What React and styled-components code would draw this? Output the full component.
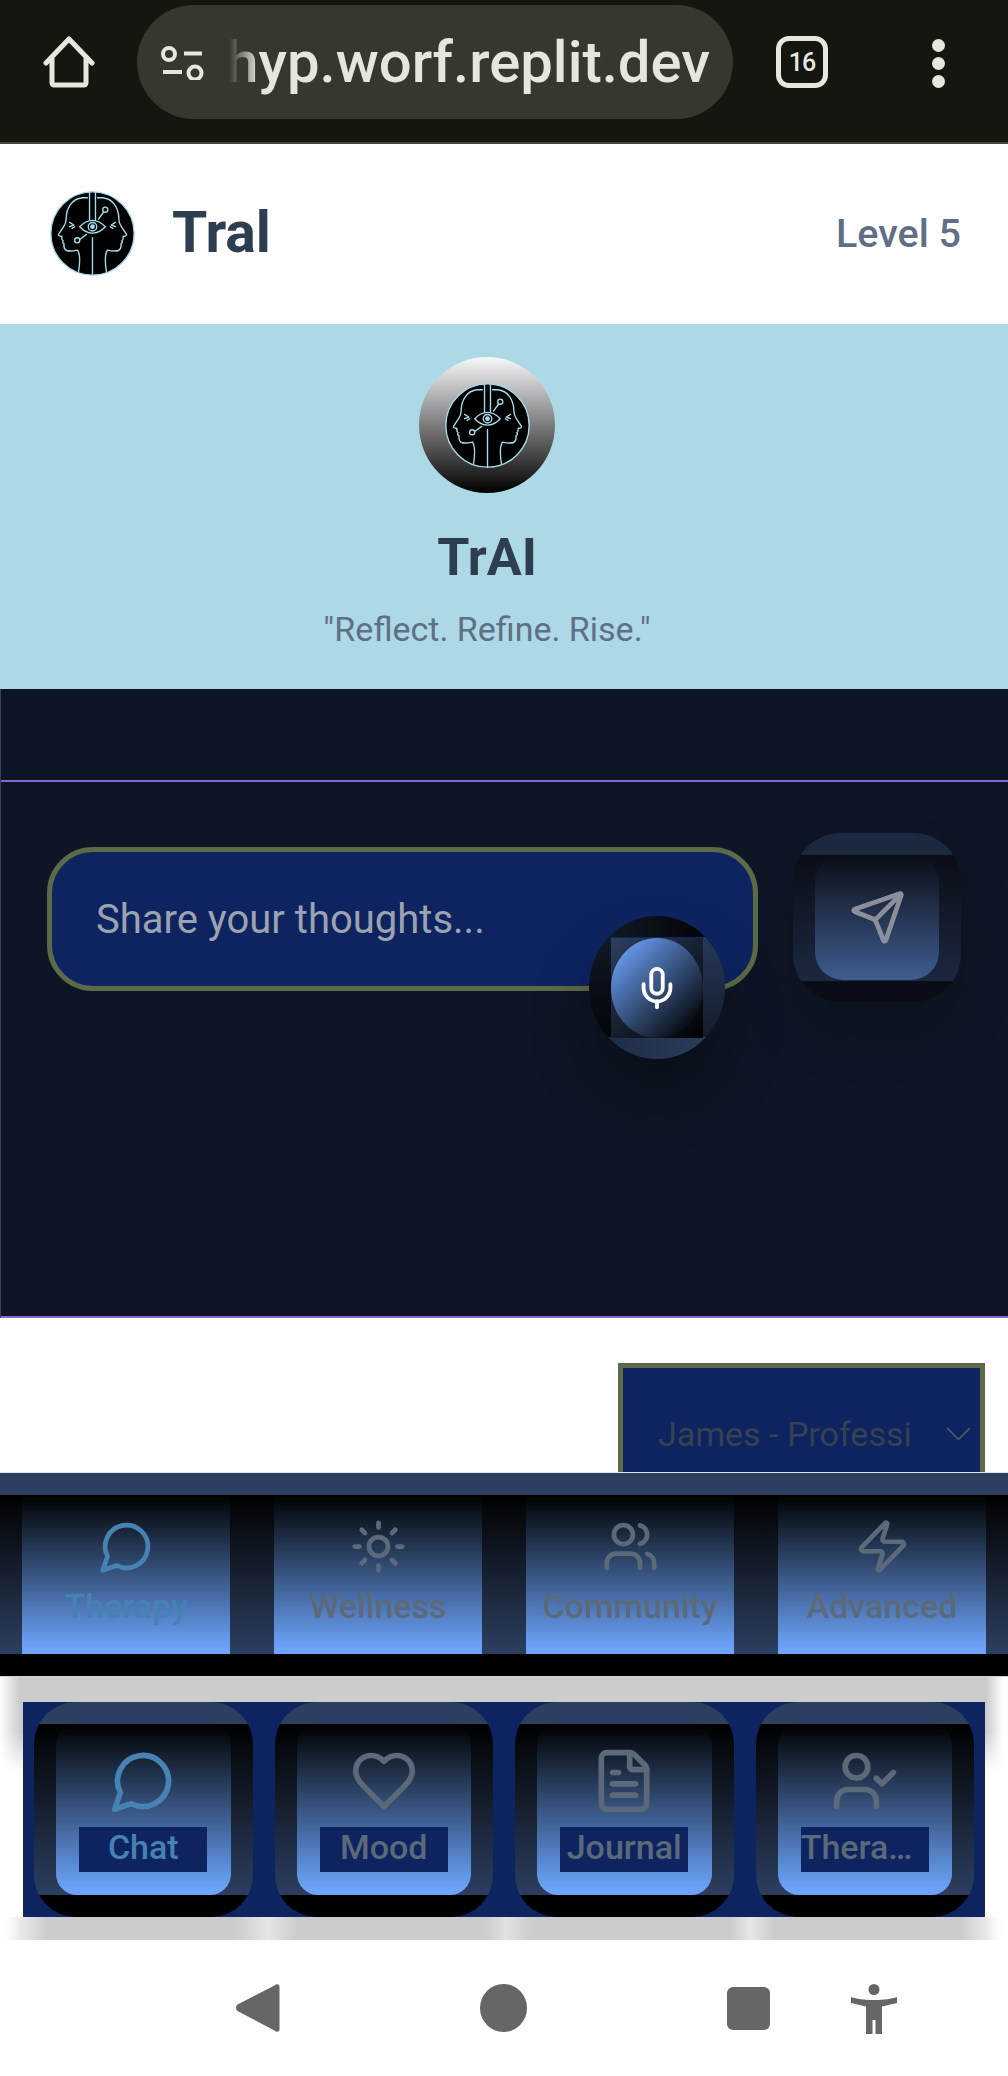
import React from "react";
import styled, { createGlobalStyle } from "styled-components";
import {
  ChevronDown,
  FileText,
  Mic,
  Send,
  Sun,
  UserCheck,
  Users,
  Zap,
} from "lucide-react";

const GlobalStyle = createGlobalStyle`
  html, body {
    margin: 0;
    padding: 0;
    background: #fff;
    font-family: "Roboto", "Liberation Sans", sans-serif;
  }
  * {
    box-sizing: border-box;
  }
`;

const pressedFace = `linear-gradient(180deg, #2c3f60 0 22px, #000 22px, #2c3f60 calc(100% - 22px), #000 calc(100% - 22px))`;

const Logo = ({ size }) => (
  <LogoSvg viewBox="0 0 100 100" width={size} height={size}>
    <circle cx="50" cy="50" r="49" fill="#000" stroke="#a5dcee" strokeWidth="1.6" />
    <path d="M46.5 1v33M53.5 1v33M50 55v45" />
    <path d="M44 8H38C26 9 19 20 19 33c0 4-1 6-3 9l-6 9c-.5 1.500 1 2 4 2.500-.5 2.500 0 4 1.500 5-1 1.500-.5 3 1 3.500-.5 4 .5 7 3 8 3 1 8 .5 13-.5 3 5 3 14 1 26" />
    <path d="M56 8h6c12 1 19 12 19 25 0 4 1 6 3 9l6 9c.5 1.500-1 2-4 2.500.5 2.500 0 4-1.500 5 1 1.500.5 3-1 3.500.5 4-.5 7-3 8-3 1-8 .5-13-.5-3 5-3 14-1 26" />
    <path d="M35 42c9-10 21-10 30 0-9 10-21 10-30 0z" />
    <circle cx="50" cy="42" r="5" />
    <circle cx="50" cy="42" r="2" fill="#a5dcee" />
    <path d="M57 33l6-8M43 51l-8 6" />
    <circle cx="65" cy="22" r="3" />
    <circle cx="32" cy="58" r="3" />
    <path d="M23 37l5 3-5 2M26 44l3-2M77 37l-5 3 5 2M74 44l-3-2" />
  </LogoSvg>
);

const ChatBubble = ({ size, strokeWidth }) => (
  <svg viewBox="0 0 24 24" width={size} height={size} fill="none" stroke="currentColor" strokeWidth={strokeWidth} strokeLinecap="round" strokeLinejoin="round">
    <path d="M7.900 20A9 9 0 1 0 4 16.100L2 22Z" />
  </svg>
);

const HeartOutline = ({ size, strokeWidth }) => (
  <svg viewBox="0 0 24 24" width={size} height={size} fill="none" stroke="currentColor" strokeWidth={strokeWidth} strokeLinecap="round" strokeLinejoin="round">
    <path d="M19 14c1.490-1.460 3-3.210 3-5.500A5.500 5.500 0 0 0 16.500 3c-1.760 0-3 .5-4.500 2-1.500-1.500-2.740-2-4.500-2A5.500 5.500 0 0 0 2 8.500c0 2.300 1.500 4.050 3 5.500l7 7Z" />
  </svg>
);

const HomeIcon = () => (
  <ChromeSvg viewBox="0 0 52 52" width="52" height="52" fill="none">
    <path d="M3 27 26 3l23 24M9 22v25a2 2 0 0 0 2 2h30a2 2 0 0 0 2-2V22" />
  </ChromeSvg>
);

const TuneIcon = () => (
  <TuneSvg viewBox="0 0 44 36" width="44" height="36" fill="none">
    <circle cx="9" cy="10" r="6" />
    <path d="M24 9.500h18M3 28h19" />
    <circle cx="35" cy="29" r="6.500" />
  </TuneSvg>
);

const BackIcon = () => (
  <svg viewBox="0 0 44 48" width="44" height="48" fill="#666">
    <path d="M40 .5c2-.8 3.500.5 3.500 2.500v42c0 2-1.500 3.300-3.500 2.500a4 4 0 0 1-1.500-1L1.500 27c-2-2-2-4.500 0-6.500L38.500 1.500a4 4 0 0 1 1.500-1z" />
  </svg>
);

const PersonIcon = () => (
  <svg viewBox="0 0 46 50" width="46" height="50" fill="#666">
    <circle cx="23" cy="5.500" r="5.500" />
    <path d="M0 13c6 2 12 3 23 3s17-1 23-3v6l-15 3.500V50h-6.500V36h-3v14H15V22.500L0 19z" />
  </svg>
);

const mainTabs = [
  { label: "Therapy", Icon: ChatBubble, active: true },
  { label: "Wellness", Icon: Sun },
  { label: "Community", Icon: Users },
  { label: "Advanced", Icon: Zap },
];

const subTabs = [
  { label: "Chat", Icon: ChatBubble, active: true },
  { label: "Mood", Icon: HeartOutline },
  { label: "Journal", Icon: FileText },
  { label: "Therapist", Icon: UserCheck },
];

const App = () => {
  return (
    <Page>
      <GlobalStyle />
      <BrowserBar>
        <HomeIcon />
        <UrlPill>
          <TuneIcon />
          <UrlText>
            <span>hyp.worf.replit.dev</span>
          </UrlText>
        </UrlPill>
        <TabCount>16</TabCount>
        <MenuDots>
          <i />
          <i />
          <i />
        </MenuDots>
      </BrowserBar>

      <Header>
        <Brand>
          <Logo size={85} />
          <BrandName>Tral</BrandName>
        </Brand>
        <LevelText>Level 5</LevelText>
      </Header>

      <Hero>
        <HeroBadge>
          <Logo size={85} />
        </HeroBadge>
        <HeroTitle>TrAI</HeroTitle>
        <Tagline>"Reflect. Refine. Rise."</Tagline>
      </Hero>

      <ChatPanel>
        <ChatArea>
          <InputWrap>
            <MessageBox>Share your thoughts...</MessageBox>
            <MicButton>
              <MicCore>
                <Mic size={46} color="#fff" strokeWidth={2} />
              </MicCore>
            </MicButton>
          </InputWrap>
          <SendButton>
            <SendCore>
              <Send size={57} color="#8b8f9a" strokeWidth={2} />
            </SendCore>
          </SendButton>
        </ChatArea>
      </ChatPanel>

      <SelectRow>
        <TherapistSelect>
          <SelectText>James - Professional</SelectText>
          <ChevronDown size={44} color="#4b5563" strokeWidth={1.1} />
        </TherapistSelect>
      </SelectRow>

      <MainNav>
        {mainTabs.map(({ label, Icon, active }) => (
          <MainCell key={label}>
            <MainTab $active={active}>
              <Icon size={57} strokeWidth={2} />
              <MainLabel>{label}</MainLabel>
            </MainTab>
          </MainCell>
        ))}
      </MainNav>

      <Tray>
        <SubNav>
          {subTabs.map(({ label, Icon, active }) => (
            <SubCell key={label}>
              <SubTab $active={active}>
                <Icon size={68} strokeWidth={2} />
                <SubLabel>{label}</SubLabel>
              </SubTab>
            </SubCell>
          ))}
        </SubNav>
      </Tray>

      <SystemBar>
        <BackIcon />
        <HomeDot />
        <RecentsSquare />
        <PersonIcon />
      </SystemBar>
    </Page>
  );
};

const Page = styled.div`
  width: 1008px;
  height: 2076px;
  display: flex;
  flex-direction: column;
  overflow: hidden;
  background: #fff;
`;

const BrowserBar = styled.div`
  height: 144px;
  flex: none;
  display: flex;
  align-items: flex-start;
  padding: 5px 0 0 43px;
  background: #14160f;
  border-bottom: 2px solid #45473f;
  & > svg:first-child {
    margin-top: 31px;
  }
`;

const ChromeSvg = styled.svg`
  flex: none;
  stroke: #e6e8df;
  stroke-width: 5;
  stroke-linecap: round;
  stroke-linejoin: round;
`;

const TuneSvg = styled(ChromeSvg)`
  stroke-width: 4;
  stroke-linecap: butt;
`;

const UrlPill = styled.div`
  width: 596px;
  height: 114px;
  margin-left: 42px;
  display: flex;
  align-items: center;
  padding: 0 23px 0 23px;
  background: #363830;
  border-radius: 57px;
  flex: none;
`;

const UrlText = styled.div`
  flex: 1;
  min-width: 0;
  margin-left: 25px;
  display: flex;
  justify-content: flex-end;
  overflow: hidden;
  color: #e4e7dd;
  font-size: 58px;
  font-weight: 500;
  line-height: 68px;
  white-space: nowrap;
  mask-image: linear-gradient(90deg, transparent 0, #000 30px);
`;

const TabCount = styled.div`
  width: 52px;
  height: 52px;
  margin: 31px 0 0 43px;
  flex: none;
  display: flex;
  align-items: center;
  justify-content: center;
  border: 5px solid #e6e8df;
  border-radius: 13px;
  color: #e6e8df;
  font-size: 25px;
  font-weight: 500;
  letter-spacing: -1px;
`;

const MenuDots = styled.div`
  margin: 34px 0 0 104px;
  display: flex;
  flex-direction: column;
  gap: 5px;
  i {
    display: block;
    width: 13px;
    height: 13px;
    border-radius: 50%;
    background: #e6e8df;
  }
`;

const Header = styled.header`
  height: 180px;
  flex: none;
  display: flex;
  align-items: center;
  justify-content: space-between;
  padding: 0 47px 2px 50px;
  background: #fff;
`;

const Brand = styled.div`
  display: flex;
  align-items: center;
  gap: 37px;
`;

const LogoSvg = styled.svg`
  display: block;
  flex: none;
  fill: none;
  stroke: #a5dcee;
  stroke-width: 1.6;
  stroke-linecap: round;
  stroke-linejoin: round;
`;

const BrandName = styled.h1`
  margin: 0;
  color: #2c3e50;
  font-size: 57px;
  font-weight: 700;
  line-height: 64px;
`;

const LevelText = styled.span`
  color: #5f6f85;
  font-size: 39.5px;
  font-weight: 500;
`;

const Hero = styled.section`
  height: 365px;
  flex: none;
  display: flex;
  flex-direction: column;
  align-items: center;
  padding: 33px 34px 0 0;
  background: #add8e6;
`;

const HeroBadge = styled.div`
  width: 136px;
  height: 136px;
  flex: none;
  display: flex;
  align-items: center;
  justify-content: center;
  border-radius: 50%;
  background: linear-gradient(180deg, #f8f8fb, #000);
`;

const HeroTitle = styled.h2`
  margin: 35px 0 0;
  color: #2c3e50;
  font-size: 52px;
  font-weight: 700;
  line-height: 60px;
`;

const Tagline = styled.p`
  margin: 21px 0 0;
  color: #5f6f85;
  font-size: 34px;
  line-height: 40px;
`;

const ChatPanel = styled.section`
  height: 629px;
  flex: none;
  padding-top: 91px;
  background: #0e1524;
  border-left: 1px solid #3a4050;
`;

const ChatArea = styled.div`
  height: 538px;
  display: flex;
  align-items: flex-start;
  gap: 35px;
  padding: 51px 46px 0 46px;
  border-top: 2px solid #8a63d2;
  border-bottom: 2px solid #8a63d2;
`;

const InputWrap = styled.div`
  position: relative;
  width: 711px;
  margin-top: 14px;
  flex: none;
`;

const MessageBox = styled.div`
  height: 144px;
  display: flex;
  align-items: center;
  padding-left: 44px;
  background: #0d2461;
  border: 5px solid #5b6b47;
  border-radius: 46px;
  color: #9ca3af;
  font-size: 40px;
`;

const MicButton = styled.div`
  position: absolute;
  left: 542px;
  top: 69px;
  width: 136px;
  height: 143px;
  display: flex;
  align-items: center;
  justify-content: center;
  border-radius: 50%;
  background:
    linear-gradient(90deg, #141d2c, #000) top / 100% 21px no-repeat,
    linear-gradient(90deg, #1c2a42, #2c3f60) bottom / 100% 22px no-repeat,
    linear-gradient(180deg, #141d2c, #000) left / 22px 100% no-repeat,
    linear-gradient(180deg, #2c3f60, #0e1522) right / 22px 100% no-repeat;
  box-shadow: 0 36px 60px rgba(0, 0, 0, 0.3);
`;

const MicCore = styled.div`
  width: 92px;
  height: 100px;
  display: flex;
  align-items: center;
  justify-content: center;
  position: relative;
  background: linear-gradient(135deg, #2c3f60, #000);
  &::before {
    content: "";
    position: absolute;
    inset: 0;
    border-radius: 50%;
    background: linear-gradient(135deg, #6ba1f7 8%, #000 92%);
  }
  svg {
    position: relative;
  }
`;

const SendButton = styled.div`
  width: 168px;
  height: 169px;
  flex: none;
  padding: 22px;
  border-radius: 48px;
  background: linear-gradient(180deg, #1c2840 0 22px, #0a0d15 22px, #1c2840 calc(100% - 21px), #0a0d15 calc(100% - 21px));
  box-shadow: 0 32px 60px rgba(0, 0, 0, 0.12);
`;

const SendCore = styled.div`
  height: 100%;
  display: flex;
  align-items: center;
  justify-content: center;
  border-radius: 28px;
  background: linear-gradient(180deg, #0a0d15, #3f5d90);
`;

const SelectRow = styled.div`
  height: 154px;
  flex: none;
  display: flex;
  justify-content: flex-end;
  align-items: flex-start;
  padding: 45px 23px 0 0;
  overflow: hidden;
  background: #fff;
`;

const TherapistSelect = styled.div`
  width: 367px;
  height: 142px;
  flex: none;
  display: flex;
  align-items: center;
  padding: 0 0 0 35px;
  background: #0d2461;
  border: 5px solid #5b6b47;
`;

const SelectText = styled.span`
  width: 253px;
  flex: none;
  margin-right: 26px;
  overflow: hidden;
  white-space: nowrap;
  color: #374151;
  font-size: 34px;
`;

const MainNav = styled.nav`
  height: 205px;
  flex: none;
  display: grid;
  grid-template-columns: repeat(4, 252px);
  border-top: 1px solid #e4e4f6;
  border-bottom: 1px solid #cfcfe0;
`;

const MainCell = styled.div`
  padding: 22px;
  background: ${pressedFace};
`;

const MainTab = styled.div`
  height: 100%;
  display: flex;
  flex-direction: column;
  align-items: center;
  padding-top: 23px;
  gap: 11px;
  background: linear-gradient(180deg, #000, #6ca4fb 97%);
  color: ${(p) => (p.$active ? "#4682b4" : "#5c6978")};
`;

const MainLabel = styled.span`
  font-size: 34px;
  font-weight: 500;
  line-height: 40px;
`;

const Tray = styled.div`
  height: 263px;
  flex: none;
  padding: 25px 23px 23px;
  background:
    linear-gradient(90deg, #fff 0, rgba(255, 255, 255, 0) 20px, rgba(255, 255, 255, 0) 986px, #fff 1003px),
    linear-gradient(90deg, #fff 0, #ccc 48px, #ccc 235px, #e6e6e6 268px, #ccc 298px, #ccc 485px, #e2e2e2 506px, #ccc 532px, #ccc 730px, #e6e6e6 750px, #ccc 775px, #ccc 960px, #fff 100%) bottom / 100% 23px no-repeat,
    linear-gradient(180deg, #ccc 0 55px, #fff 95px);
`;

const SubNav = styled.div`
  height: 215px;
  display: grid;
  grid-template-columns: repeat(4, 1fr);
  gap: 22px;
  padding: 0 11px;
  background: #0d2461;
`;

const SubCell = styled.div`
  padding: 22px;
  border-radius: 42px;
  background: ${pressedFace};
`;

const SubTab = styled.div`
  height: 100%;
  display: flex;
  flex-direction: column;
  align-items: center;
  padding-top: 23px;
  gap: 12px;
  border-radius: 21px;
  background: linear-gradient(180deg, #000, #6ca4fb 97%);
  color: ${(p) => (p.$active ? "#4682b4" : "#5c6978")};
`;

const SubLabel = styled.span`
  width: 128px;
  height: 45px;
  flex: none;
  overflow: hidden;
  text-align: center;
  text-overflow: ellipsis;
  white-space: nowrap;
  background: #0d2461;
  font-size: 34px;
  font-weight: 500;
  line-height: 41px;
`;

const SystemBar = styled.div`
  flex: 1;
  display: flex;
  align-items: flex-start;
  padding: 44px 0 0 236px;
  background: #fff;
  gap: 0;
  & > svg:first-child {
    margin-right: 200px;
  }
  & > svg:last-child {
    margin-left: 81px;
  }
`;

const HomeDot = styled.div`
  width: 47px;
  height: 48px;
  border-radius: 50%;
  background: #666;
  margin-right: 200px;
`;

const RecentsSquare = styled.div`
  width: 43px;
  height: 43px;
  margin-top: 3px;
  border-radius: 6px;
  background: #666;
`;

export default App;
